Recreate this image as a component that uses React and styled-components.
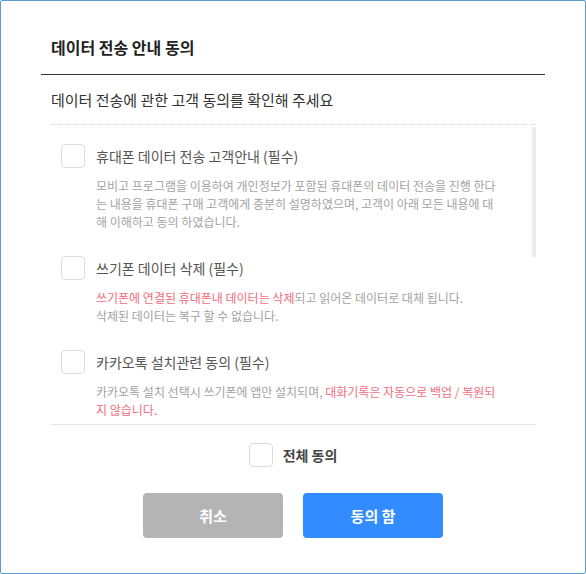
import React from "react";
import styled, { createGlobalStyle } from "styled-components";

const Global = createGlobalStyle`
  html, body { margin: 0; padding: 0; background: #fff; }
  body { font-family: "Noto Sans CJK KR", "Noto Sans", sans-serif; }
  * { box-sizing: border-box; }
`;

const Dialog = styled.div`
  width: 586px;
  height: 574px;
  border: 1px solid #5b9bd5;
  border-radius: 2px;
  background: #fff;
  padding: 0 40px;
  display: flex;
  flex-direction: column;
`;

const Header = styled.div`
  padding: 34px 10px 15px;
  border-bottom: 1px solid #333;
`;

const Title = styled.h1`
  margin: 0;
  font-size: 16px;
  line-height: 24px;
  font-weight: 700;
  color: #222;
`;

const Subtitle = styled.p`
  margin: 15px 0 0;
  padding-left: 10px;
  font-size: 15px;
  line-height: 20px;
  color: #333;
`;

const ScrollArea = styled.div`
  position: relative;
  margin: 14px 9px 0 10px;
  height: 301px;
  border-top: 1px dotted #d6d6d6;
  border-bottom: 1px dotted #d6d6d6;
`;

const Viewport = styled.div`
  height: 100%;
  overflow-y: auto;
  scrollbar-width: none;
  &::-webkit-scrollbar { display: none; }
`;

const Thumb = styled.div`
  position: absolute;
  top: 2px;
  right: 0;
  width: 4px;
  height: 130px;
  background: #ececec;
`;

const List = styled.div`
  padding: 19px 0 24px 10px;
  display: flex;
  flex-direction: column;
  gap: 25px;
`;

const Item = styled.div`
  display: flex;
  flex-direction: column;
`;

const Row = styled.label`
  display: flex;
  align-items: center;
  gap: ${(p) => p.$gap || 11}px;
  cursor: pointer;
`;

const Box = styled.span`
  width: 24px;
  height: 24px;
  flex: none;
  border: 1px solid #dcdcdc;
  border-radius: 4px;
  background: #fff;
`;

const Label = styled.span`
  font-size: 14px;
  line-height: 20px;
  color: ${(p) => (p.$strong ? "#444" : "#555")};
  font-weight: ${(p) => (p.$strong ? 700 : 400)};
`;

const Desc = styled.p`
  margin: 9px 0 0 35px;
  font-size: 12px;
  line-height: 18px;
  color: #a3a3a3;
  white-space: nowrap;
`;

const Red = styled.span`
  color: #f26d7d;
`;

const AllRow = styled.div`
  margin-top: 18px;
  display: flex;
  justify-content: center;
`;

const Buttons = styled.div`
  margin-top: 26px;
  display: flex;
  justify-content: center;
  gap: 20px;
`;

const Button = styled.button`
  width: 140px;
  height: 45px;
  border: none;
  border-radius: 4px;
  background: ${(p) => (p.$primary ? "#338cff" : "#b4b4b4")};
  color: #fff;
  font-family: inherit;
  font-size: 15px;
  font-weight: 700;
  cursor: pointer;
`;

const items = [
  {
    label: "휴대폰 데이터 전송 고객안내 (필수)",
    lines: [
      ["모비고 프로그램을 이용하여 개인정보가 포함된 휴대폰의 데이터 전송을 진행 한다"],
      ["는 내용을 휴대폰 구매 고객에게 충분히 설명하였으며, 고객이 아래 모든 내용에 대"],
      ["해 이해하고 동의 하였습니다."],
    ],
  },
  {
    label: "쓰기폰 데이터 삭제 (필수)",
    lines: [
      [{ red: "쓰기폰에 연결된 휴대폰내 데이터는 삭제" }, "되고 읽어온 데이터로 대체 됩니다."],
      ["삭제된 데이터는 복구 할 수 없습니다."],
    ],
  },
  {
    label: "카카오톡 설치관련 동의 (필수)",
    lines: [
      ["카카오톡 설치 선택시 쓰기폰에 앱만 설치되며, ", { red: "대화기록은 자동으로 백업 / 복원되" }],
      [{ red: "지 않습니다." }],
    ],
  },
];

export default function App() {
  return (
    <>
      <Global />
      <Dialog>
        <Header>
          <Title>데이터 전송 안내 동의</Title>
        </Header>
        <Subtitle>데이터 전송에 관한 고객 동의를 확인해 주세요</Subtitle>
        <ScrollArea>
          <Viewport>
            <List>
              {items.map((it) => (
                <Item key={it.label}>
                  <Row>
                    <Box />
                    <Label>{it.label}</Label>
                  </Row>
                  <Desc>
                    {it.lines.map((line, i) => (
                      <React.Fragment key={i}>
                        {i > 0 && <br />}
                        {line.map((seg, j) =>
                          typeof seg === "string" ? (
                            <React.Fragment key={j}>{seg}</React.Fragment>
                          ) : (
                            <Red key={j}>{seg.red}</Red>
                          )
                        )}
                      </React.Fragment>
                    ))}
                  </Desc>
                </Item>
              ))}
            </List>
          </Viewport>
          <Thumb />
        </ScrollArea>
        <AllRow>
          <Row $gap={10}>
            <Box />
            <Label $strong>전체 동의</Label>
          </Row>
        </AllRow>
        <Buttons>
          <Button>취소</Button>
          <Button $primary>동의 함</Button>
        </Buttons>
      </Dialog>
    </>
  );
}
